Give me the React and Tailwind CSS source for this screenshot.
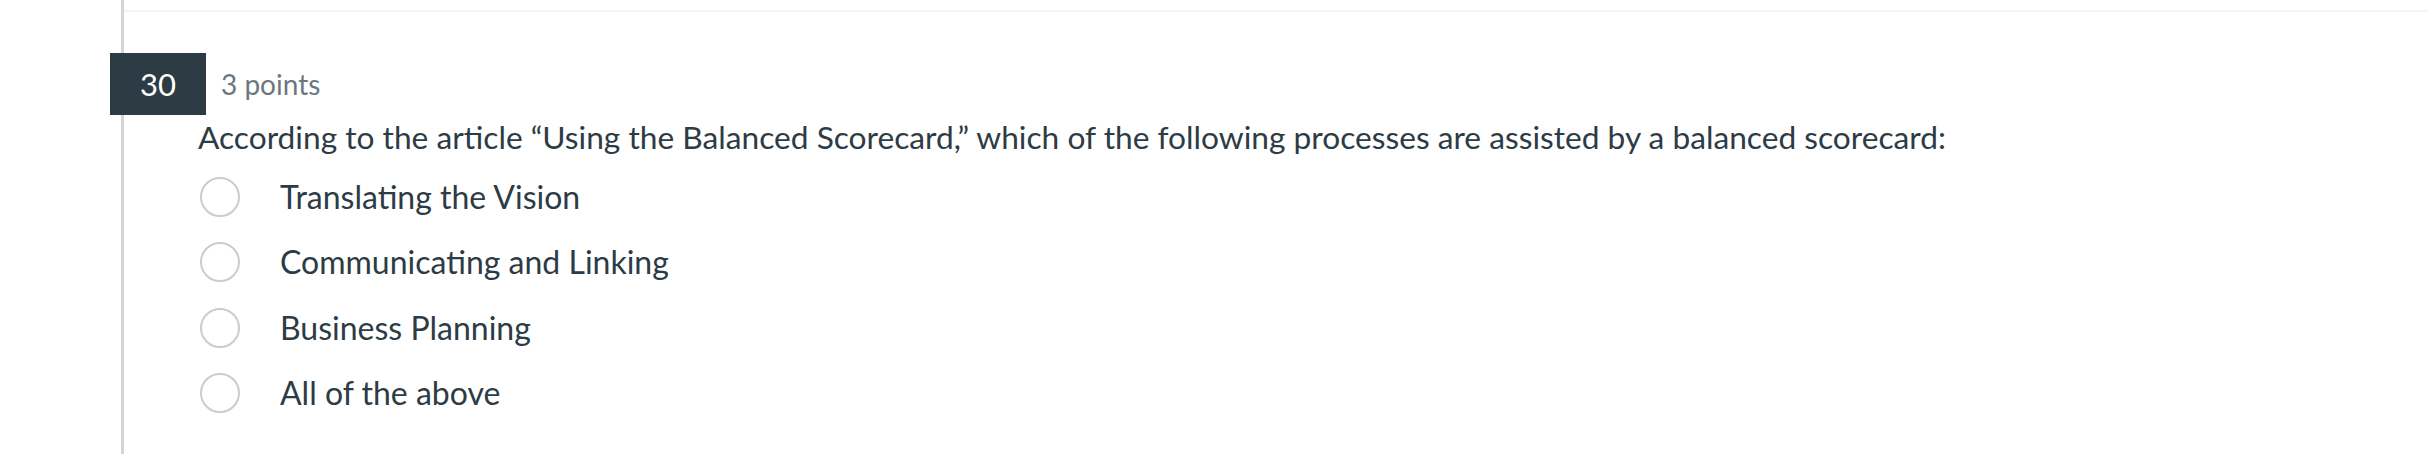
const options = [
  "Translating the Vision",
  "Communicating and Linking",
  "Business Planning",
  "All of the above",
];

export default function App() {
  return (
    <div className="w-[2428px] h-[454px] bg-white flex overflow-hidden font-['Lato',sans-serif] text-[#2d3b45]">
      <div className="w-[121px] shrink-0" />
      <div className="w-[3px] shrink-0 bg-[#d0d5d9]" />
      <div className="flex-1">
        <div className="mt-[10px] h-[2px] bg-[#f3f3f3]" />

        {/* question header */}
        <div className="mt-[41px] -ml-[14px] flex items-center">
          <div className="w-[96px] h-[62px] bg-[#2d3b45] text-white text-[31px] flex items-center justify-center">
            30
          </div>
          <span className="ml-[15px] text-[28px] text-[#6b7780]">3 points</span>
        </div>

        <p className="mt-[2px] ml-[74px] text-[31.7px] leading-[40px]">
          According to the article “Using the Balanced Scorecard,” which of the following processes are assisted by a balanced scorecard:
        </p>

        <div className="mt-[7px] ml-[76px]">
          {options.map((opt) => (
            <label key={opt} className="h-[65.5px] flex items-center">
              <span className="w-[40px] h-[40px] rounded-full border-2 border-[#c7cdd1] bg-white" />
              <span className="ml-[40px] text-[32px] leading-[40px]">{opt}</span>
            </label>
          ))}
        </div>
      </div>
    </div>
  );
}
